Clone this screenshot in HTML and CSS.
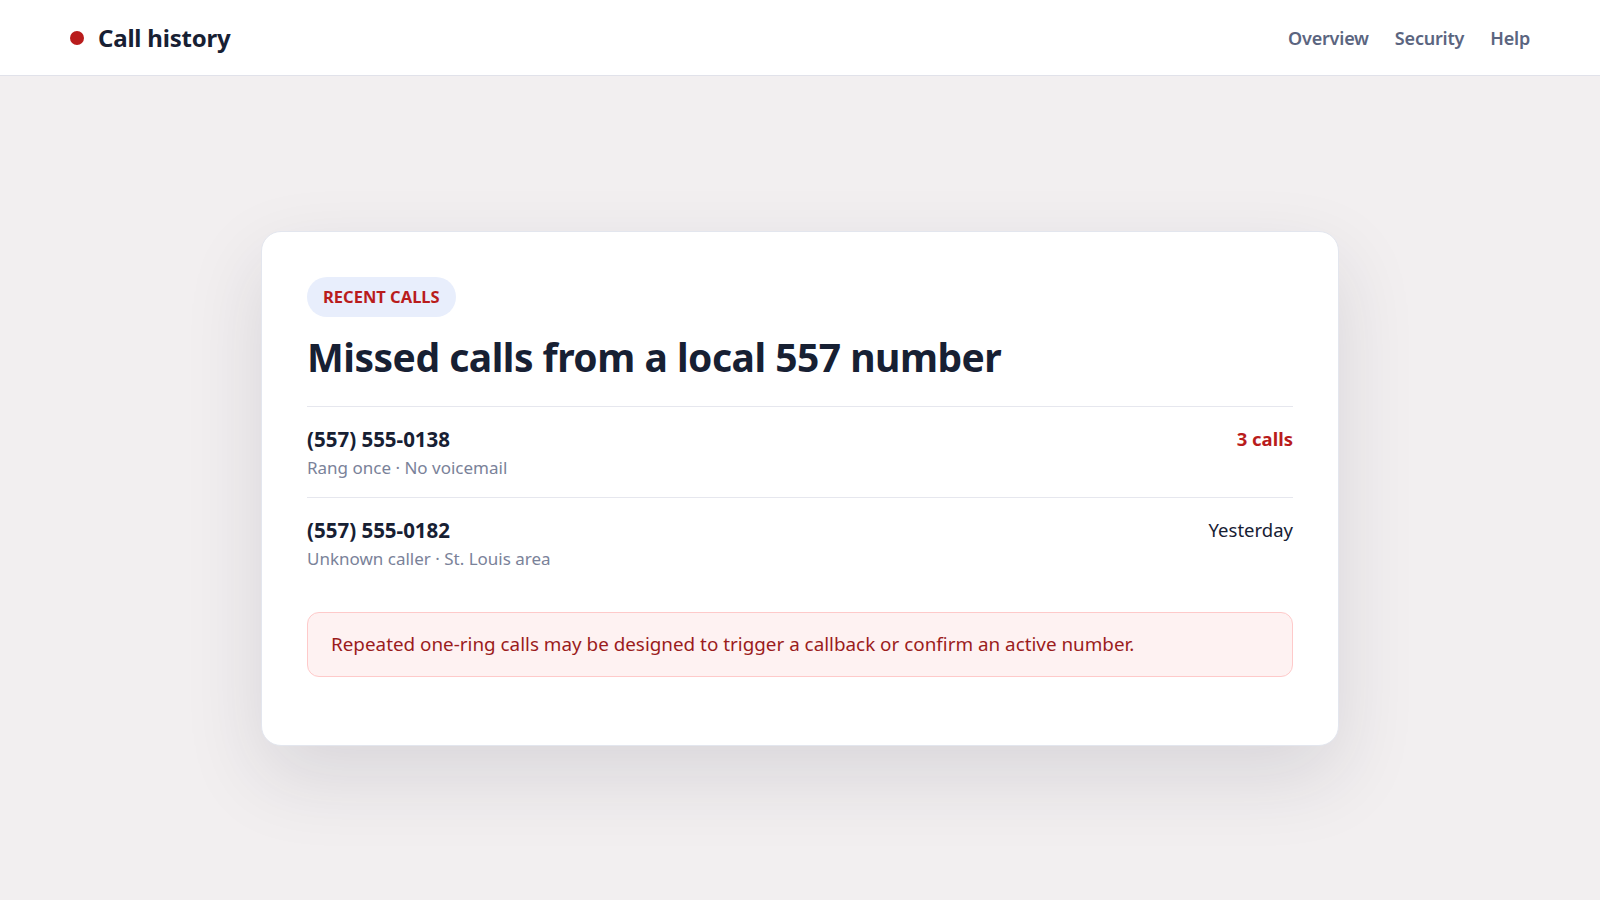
FILE: index.html
```html
<!DOCTYPE html>
<html lang="en">
<head>
    <meta charset="UTF-8">
    <meta name="viewport" content="width=device-width, initial-scale=1.0">
    <title>Call history</title>
    <link rel="stylesheet" href="styles.css">
</head>
<body>
    <header class="topbar">
        <div class="brand">
            <span class="brand-dot"></span>
            <span class="brand-name">Call history</span>
        </div>
        <nav class="nav">
            <a href="#">Overview</a>
            <a href="#">Security</a>
            <a href="#">Help</a>
        </nav>
    </header>
    <main class="page">
        <section class="card">
            <span class="badge">Recent calls</span>
            <h1>Missed calls from a local 557 number</h1>
            <ul class="call-list">
                <li class="call">
                    <div class="call-info">
                        <div class="call-number">(557) 555-0138</div>
                        <div class="call-meta">Rang once · No voicemail</div>
                    </div>
                    <div class="call-side call-count">3 calls</div>
                </li>
                <li class="call">
                    <div class="call-info">
                        <div class="call-number">(557) 555-0182</div>
                        <div class="call-meta">Unknown caller · St. Louis area</div>
                    </div>
                    <div class="call-side">Yesterday</div>
                </li>
            </ul>
            <div class="alert">
                Repeated one-ring calls may be designed to trigger a callback or confirm an active number.
            </div>
        </section>
    </main>
</body>
</html>
```

FILE: styles.css
```css
* {
    box-sizing: border-box;
}
body {
    margin: 0;
    font-family: 'Noto Sans', 'Open Sans', Arial, sans-serif;
    background-color: #f2eff0;
    color: #172033;
}
.topbar {
    height: 76px;
    padding: 0 70px;
    display: flex;
    align-items: center;
    justify-content: space-between;
    background-color: white;
    border-bottom: 1px solid #e1e2ea;
}
.brand {
    display: flex;
    align-items: center;
    gap: 14px;
}
.brand-dot {
    width: 14px;
    height: 14px;
    border-radius: 50%;
    background-color: #b91c1c;
}
.brand-name {
    font-size: 24px;
    font-weight: 700;
    letter-spacing: -0.2px;
    color: #172033;
}
.nav {
    display: flex;
    gap: 26px;
}
.nav a {
    font-size: 18px;
    font-weight: 600;
    letter-spacing: -0.2px;
    color: #5b6580;
    text-decoration: none;
}
.page {
    min-height: calc(100vh - 76px);
    display: flex;
    align-items: center;
    justify-content: center;
}
.card {
    width: 1078px;
    padding: 45px;
    background-color: white;
    border: 1px solid #e3e6ee;
    border-radius: 20px;
    box-shadow: 0 30px 80px rgba(30, 30, 60, 0.12);
}
.badge {
    display: inline-flex;
    align-items: center;
    height: 40px;
    padding: 0 16px;
    border-radius: 999px;
    background-color: #e8eefc;
    color: #b91c1c;
    font-size: 16.5px;
    font-weight: 700;
    text-transform: uppercase;
}
h1 {
    margin: 15px 0 24px;
    font-size: 39px;
    line-height: 50px;
    font-weight: 700;
    letter-spacing: -0.5px;
    color: #172033;
}
.call-list {
    list-style: none;
    margin: 0;
    padding: 0;
}
.call {
    display: flex;
    justify-content: space-between;
    align-items: flex-start;
    padding: 19px 0 17px;
    border-top: 1px solid #e6e7ee;
}
.call-number {
    font-size: 20.5px;
    line-height: 26px;
    font-weight: 700;
}
.call-meta {
    margin-top: 3px;
    font-size: 17px;
    line-height: 25px;
    color: #7a8299;
}
.call-side {
    font-size: 18.5px;
    line-height: 26px;
    color: #172033;
}
.call-count {
    font-weight: 700;
    color: #b91c1c;
}
.alert {
    margin: 24px 0 23px;
    padding: 0 23px;
    height: 65px;
    display: flex;
    align-items: center;
    background-color: #fef2f2;
    border: 1px solid #fecaca;
    border-radius: 12px;
    color: #9b1c1c;
    font-size: 18.85px;
}
```
